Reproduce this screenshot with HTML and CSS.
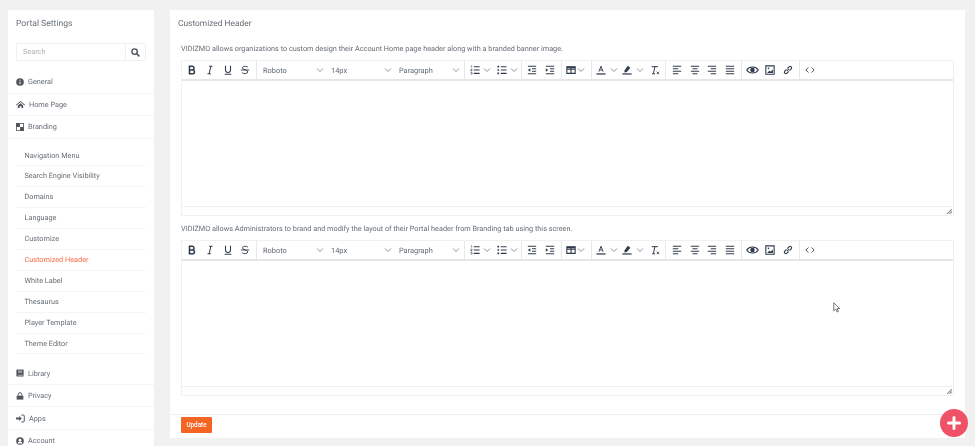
FILE: index.html
```html
<!DOCTYPE html>
<html lang="en">
<head>
<meta charset="utf-8">
<title>Portal Settings</title>
<link rel="stylesheet" href="styles.css">
</head>
<body>
<svg class="defs" width="0" height="0" aria-hidden="true">
  <symbol id="i-bold" viewBox="0 0 12 12"><path d="M3 1.500h3.600a2.300 2.300 0 0 1 0 4.500H3zM3 6h4.200a2.300 2.300 0 0 1 0 4.500H3z" fill="none" stroke="currentColor" stroke-width="1.900"/></symbol>
  <symbol id="i-italic" viewBox="0 0 12 12"><path d="M5 1.500h4M3 10.500h4M7 1.500l-2 9" fill="none" stroke="currentColor" stroke-width="1.200"/></symbol>
  <symbol id="i-under" viewBox="0 0 12 12"><path d="M3 1v5a3 3 0 0 0 6 0V1M2 11h8" fill="none" stroke="currentColor" stroke-width="1.300"/></symbol>
  <symbol id="i-strike" viewBox="0 0 12 12"><path d="M9.500 2.600C8.600 1.400 3 .8 2.900 3.500 2.800 5.500 9.300 5.800 9.300 8.400 9.300 11 3.500 10.800 2.400 9.200M1 6h10" fill="none" stroke="currentColor" stroke-width="1.100"/></symbol>
  <symbol id="i-chev" viewBox="0 0 8 8"><path d="M1 2.500l3 3 3-3" fill="none" stroke="currentColor" stroke-width="1"/></symbol>
  <symbol id="i-ol" viewBox="0 0 12 12"><path d="M4.500 2h7M4.500 6h7M4.500 10h7" stroke="currentColor" stroke-width="1.300"/><path d="M1 1h1v2M.7 5h1.800v1.200H1V7.200h1.500M.7 9h1.800v2H.7" fill="none" stroke="currentColor" stroke-width=".7"/></symbol>
  <symbol id="i-ul" viewBox="0 0 12 12"><path d="M4.500 2h7M4.500 6h7M4.500 10h7" stroke="currentColor" stroke-width="1.300"/><path d="M.5 1h2v2h-2zM.5 5h2v2h-2zM.5 9h2v2h-2z" fill="currentColor"/></symbol>
  <symbol id="i-out" viewBox="0 0 12 12"><path d="M1 1.500h10M6 4.500h5M6 7.500h5M1 10.500h10" stroke="currentColor" stroke-width="1.200"/><path d="M4 3.800v4.400L1 6z" fill="currentColor"/></symbol>
  <symbol id="i-in" viewBox="0 0 12 12"><path d="M1 1.500h10M6 4.500h5M6 7.500h5M1 10.500h10" stroke="currentColor" stroke-width="1.200"/><path d="M1 3.800v4.400L4 6z" fill="currentColor"/></symbol>
  <symbol id="i-table" viewBox="0 0 12 10"><path d="M1 1h10v8H1zM1 4h10M6 1v8" fill="none" stroke="currentColor" stroke-width="1.300"/><path d="M1 1h10v2H1z" fill="currentColor"/></symbol>
  <symbol id="i-color" viewBox="0 0 12 12"><path d="M3.500 8L6 1.500 8.500 8M4.300 6h3.400" fill="none" stroke="currentColor" stroke-width="1.100"/><path d="M.5 10h11v1.500H.5z" fill="currentColor"/></symbol>
  <symbol id="i-mark" viewBox="0 0 12 12"><path d="M3 6.500l4-5.500 3 2.200-4.200 5.300-2.800.5z" fill="currentColor"/><path d="M.5 10h11v1.500H.5z" fill="currentColor"/></symbol>
  <symbol id="i-clear" viewBox="0 0 12 12"><path d="M2 2h7.500M5.800 2L4.200 10M2.500 10.500h3.500" fill="none" stroke="currentColor" stroke-width="1.200"/><path d="M8 8l3 3M11 8l-3 3" stroke="currentColor" stroke-width="1"/></symbol>
  <symbol id="i-left" viewBox="0 0 12 12"><path d="M1 1.500h10M1 4.500h6.500M1 7.500h10M1 10.500h6.500" stroke="currentColor" stroke-width="1.200"/></symbol>
  <symbol id="i-center" viewBox="0 0 12 12"><path d="M1 1.500h10M3 4.500h6M1 7.500h10M3 10.500h6" stroke="currentColor" stroke-width="1.200"/></symbol>
  <symbol id="i-right" viewBox="0 0 12 12"><path d="M1 1.500h10M4.500 4.500H11M1 7.500h10M4.500 10.500H11" stroke="currentColor" stroke-width="1.200"/></symbol>
  <symbol id="i-just" viewBox="0 0 12 12"><path d="M1 1.500h10M1 4.500h10M1 7.500h10M1 10.500h10" stroke="currentColor" stroke-width="1.200"/></symbol>
  <symbol id="i-eye" viewBox="0 0 14 10"><path d="M.8 5C3.500.6 10.500.6 13.200 5 10.500 9.400 3.500 9.400.8 5z" fill="none" stroke="currentColor" stroke-width="1.200"/><circle cx="7" cy="5" r="2.400" fill="currentColor"/></symbol>
  <symbol id="i-img" viewBox="0 0 12 12"><path d="M1 1h10v10H1z" fill="none" stroke="currentColor" stroke-width="1.300"/><path d="M2.500 9.500l3-3 1.500 1.500 2.500-3v4.500z" fill="currentColor"/><circle cx="4.200" cy="4" r="1" fill="currentColor"/></symbol>
  <symbol id="i-link" viewBox="0 0 12 12"><path d="M5 7l2-2M4.200 5.300L2 7.500a1.800 1.800 0 0 0 2.500 2.500l2.200-2.200M5.300 4.200L7.500 2A1.800 1.800 0 0 1 10 4.500L7.800 6.700" fill="none" stroke="currentColor" stroke-width="1.300"/></symbol>
  <symbol id="i-code" viewBox="0 0 12 8"><path d="M4 1L1 4l3 3M8 1l3 3-3 3" fill="none" stroke="currentColor" stroke-width="1.100"/></symbol>
  <symbol id="i-grip" viewBox="0 0 6 6"><path d="M0 6l6-6M3 6l3-3" stroke="#8a8f94" stroke-width="1.300"/></symbol>
</svg>

<div class="page">
  <aside class="sidebar">
    <h2 class="side-title">Portal Settings</h2>
    <div class="search">
      <span class="search-input">Search</span>
      <span class="search-btn">
        <svg viewBox="0 0 10 10" width="9" height="9"><circle cx="4" cy="4" r="3" fill="none" stroke="#495057" stroke-width="1.500"/><path d="M6.300 6.300L9.300 9.300" stroke="#495057" stroke-width="1.700"/></svg>
      </span>
    </div>
    <ul class="menu">
      <li class="menu-item"><svg class="menu-icon" viewBox="0 0 10 10"><circle cx="5" cy="5" r="4.800" fill="currentColor"/><path d="M5 2.200v1.300M5 4.500v3.200" stroke="#fff" stroke-width="1.100"/></svg>General</li>
      <li class="menu-item"><svg class="menu-icon icon-wide" viewBox="0 0 10 10"><path d="M0 5.300L5 1l5 4.300-.6.700L5 2.300.6 6zM2 6l3-2.500L8 6v3H6V7H4v2H2z" fill="currentColor"/></svg>Home Page</li>
      <li class="menu-item"><svg class="menu-icon" viewBox="0 0 10 10"><path d="M0 0h10v10H0z" fill="currentColor"/><path d="M5 1h4v4H5zM1 5h4v4H1z" fill="#fff"/></svg>Branding</li>
    </ul>
    <ul class="submenu">
      <li class="sub-item">Navigation Menu</li>
      <li class="sub-item">Search Engine Visibility</li>
      <li class="sub-item">Domains</li>
      <li class="sub-item">Language</li>
      <li class="sub-item">Customize</li>
      <li class="sub-item sub-active">Customized Header</li>
      <li class="sub-item">White Label</li>
      <li class="sub-item">Thesaurus</li>
      <li class="sub-item">Player Template</li>
      <li class="sub-item">Theme Editor</li>
    </ul>
    <ul class="menu">
      <li class="menu-item"><svg class="menu-icon" viewBox="0 0 10 10"><path d="M.5 1.500A1 1 0 0 1 1.500.5h8v9h-8a1 1 0 0 1-1-1z" fill="currentColor"/><path d="M2.500 2.500h5M2.500 4h5M2.500 7.800h6" stroke="#fff" stroke-width=".7"/></svg>Library</li>
      <li class="menu-item"><svg class="menu-icon" viewBox="0 0 10 10"><path d="M2.800 4.500V3a2.200 2.200 0 0 1 4.400 0v1.500" fill="none" stroke="currentColor" stroke-width="1.200"/><path d="M.8 4.500h8.400v5H.8z" fill="currentColor"/></svg>Privacy</li>
      <li class="menu-item"><svg class="menu-icon icon-wide" viewBox="0 0 10 10"><path d="M0 4h3.500V2.300L6.500 5l-3 2.700V6H0z" fill="currentColor"/><path d="M6 1.200h2.200a1 1 0 0 1 1 1v5.600a1 1 0 0 1-1 1H6" fill="none" stroke="currentColor" stroke-width="1.100"/></svg>Apps</li>
      <li class="menu-item"><svg class="menu-icon" viewBox="0 0 10 10"><circle cx="5" cy="5" r="4.800" fill="currentColor"/><circle cx="5" cy="4" r="1.700" fill="#fff"/><path d="M2 8a3 2.400 0 0 1 6 0z" fill="#fff"/></svg>Account</li>
    </ul>
  </aside>

  <main class="content">
    <h1 class="content-title">Customized Header</h1>
    <div class="content-body">
      <p class="desc">VIDIZMO allows organizations to custom design their Account Home page header along with a branded banner image.</p>
      <section class="editor">
        <div class="toolbar">
          <div class="tgroup g-format">
            <span class="tbtn"><svg class="ico"><use href="#i-bold"/></svg></span>
            <span class="tbtn"><svg class="ico"><use href="#i-italic"/></svg></span>
            <span class="tbtn"><svg class="ico"><use href="#i-under"/></svg></span>
            <span class="tbtn"><svg class="ico"><use href="#i-strike"/></svg></span>
          </div>
          <div class="tgroup g-selects">
            <span class="tselect">Roboto<svg class="chev"><use href="#i-chev"/></svg></span>
            <span class="tselect">14px<svg class="chev"><use href="#i-chev"/></svg></span>
            <span class="tselect">Paragraph<svg class="chev"><use href="#i-chev"/></svg></span>
          </div>
          <div class="tgroup g-lists">
            <span class="tsplit"><svg class="ico"><use href="#i-ol"/></svg><svg class="chev"><use href="#i-chev"/></svg></span>
            <span class="tsplit"><svg class="ico"><use href="#i-ul"/></svg><svg class="chev"><use href="#i-chev"/></svg></span>
          </div>
          <div class="tgroup g-indent">
            <span class="tbtn"><svg class="ico"><use href="#i-out"/></svg></span>
            <span class="tbtn"><svg class="ico"><use href="#i-in"/></svg></span>
          </div>
          <div class="tgroup g-table">
            <span class="tsplit split-tight"><svg class="ico"><use href="#i-table"/></svg><svg class="chev"><use href="#i-chev"/></svg></span>
          </div>
          <div class="tgroup g-color">
            <span class="tsplit split-loose"><svg class="ico"><use href="#i-color"/></svg><svg class="chev"><use href="#i-chev"/></svg></span>
            <span class="tsplit split-loose"><svg class="ico"><use href="#i-mark"/></svg><svg class="chev"><use href="#i-chev"/></svg></span>
            <span class="tbtn"><svg class="ico"><use href="#i-clear"/></svg></span>
          </div>
          <div class="tgroup g-align">
            <span class="tbtn"><svg class="ico"><use href="#i-left"/></svg></span>
            <span class="tbtn"><svg class="ico"><use href="#i-center"/></svg></span>
            <span class="tbtn"><svg class="ico"><use href="#i-right"/></svg></span>
            <span class="tbtn"><svg class="ico"><use href="#i-just"/></svg></span>
          </div>
          <div class="tgroup g-insert">
            <span class="tbtn"><svg class="ico wide"><use href="#i-eye"/></svg></span>
            <span class="tbtn"><svg class="ico"><use href="#i-img"/></svg></span>
            <span class="tbtn"><svg class="ico"><use href="#i-link"/></svg></span>
          </div>
          <div class="tgroup g-code">
            <span class="tbtn"><svg class="ico"><use href="#i-code"/></svg></span>
          </div>
        </div>
        <div class="edit-area"></div>
        <div class="statusbar"><svg class="grip"><use href="#i-grip"/></svg></div>
      </section>
      <p class="desc desc-second">VIDIZMO allows Administrators to brand and modify the layout of their Portal header from Branding tab using this screen.</p>
      <section class="editor">
        <div class="toolbar">
          <div class="tgroup g-format">
            <span class="tbtn"><svg class="ico"><use href="#i-bold"/></svg></span>
            <span class="tbtn"><svg class="ico"><use href="#i-italic"/></svg></span>
            <span class="tbtn"><svg class="ico"><use href="#i-under"/></svg></span>
            <span class="tbtn"><svg class="ico"><use href="#i-strike"/></svg></span>
          </div>
          <div class="tgroup g-selects">
            <span class="tselect">Roboto<svg class="chev"><use href="#i-chev"/></svg></span>
            <span class="tselect">14px<svg class="chev"><use href="#i-chev"/></svg></span>
            <span class="tselect">Paragraph<svg class="chev"><use href="#i-chev"/></svg></span>
          </div>
          <div class="tgroup g-lists">
            <span class="tsplit"><svg class="ico"><use href="#i-ol"/></svg><svg class="chev"><use href="#i-chev"/></svg></span>
            <span class="tsplit"><svg class="ico"><use href="#i-ul"/></svg><svg class="chev"><use href="#i-chev"/></svg></span>
          </div>
          <div class="tgroup g-indent">
            <span class="tbtn"><svg class="ico"><use href="#i-out"/></svg></span>
            <span class="tbtn"><svg class="ico"><use href="#i-in"/></svg></span>
          </div>
          <div class="tgroup g-table">
            <span class="tsplit split-tight"><svg class="ico"><use href="#i-table"/></svg><svg class="chev"><use href="#i-chev"/></svg></span>
          </div>
          <div class="tgroup g-color">
            <span class="tsplit split-loose"><svg class="ico"><use href="#i-color"/></svg><svg class="chev"><use href="#i-chev"/></svg></span>
            <span class="tsplit split-loose"><svg class="ico"><use href="#i-mark"/></svg><svg class="chev"><use href="#i-chev"/></svg></span>
            <span class="tbtn"><svg class="ico"><use href="#i-clear"/></svg></span>
          </div>
          <div class="tgroup g-align">
            <span class="tbtn"><svg class="ico"><use href="#i-left"/></svg></span>
            <span class="tbtn"><svg class="ico"><use href="#i-center"/></svg></span>
            <span class="tbtn"><svg class="ico"><use href="#i-right"/></svg></span>
            <span class="tbtn"><svg class="ico"><use href="#i-just"/></svg></span>
          </div>
          <div class="tgroup g-insert">
            <span class="tbtn"><svg class="ico wide"><use href="#i-eye"/></svg></span>
            <span class="tbtn"><svg class="ico"><use href="#i-img"/></svg></span>
            <span class="tbtn"><svg class="ico"><use href="#i-link"/></svg></span>
          </div>
          <div class="tgroup g-code">
            <span class="tbtn"><svg class="ico"><use href="#i-code"/></svg></span>
          </div>
        </div>
        <div class="edit-area"></div>
        <div class="statusbar"><svg class="grip"><use href="#i-grip"/></svg></div>
      </section>
    </div>
    <div class="content-foot">
      <button class="update" type="button">Update</button>
    </div>
  </main>
</div>

<svg class="cursor" viewBox="0 0 8 11" width="8" height="11"><path d="M.8.8v8l2-1.700 1.300 2.900 1.300-.6-1.300-2.800h2.700z" fill="#fff" stroke="#555" stroke-width=".8"/></svg>
<button class="fab" type="button" aria-label="Add"><svg viewBox="0 0 14 14" width="14" height="14"><path d="M7 1.500v11M1.500 7h11" stroke="#fff" stroke-width="3" stroke-linecap="round"/></svg></button>
</body>
</html>
```

FILE: styles.css
```css
* { box-sizing: border-box; }
html, body { margin: 0; height: 100%; }
body {
  background: #f1f1f1;
  font-family: Roboto, "Liberation Sans", sans-serif;
  color: #666e76;
  overflow: hidden;
  text-rendering: geometricPrecision;
}
ul { list-style: none; margin: 0; padding: 0; }
.defs { position: absolute; }
.page {
  display: flex;
  align-items: flex-start;
  gap: 16px;
  height: 446px;
  padding: 10px 10px 0 8px;
  overflow: hidden;
  will-change: transform;
}
.sidebar {
  flex: 0 0 146px;
  min-height: 440px;
  background: #fff;
}
.side-title {
  margin: 0;
  padding: 7.500px 8px 0;
  height: 33px;
  font-size: 8.600px;
  line-height: 12px;
  font-weight: 400;
  color: #666e76;
}
.search {
  display: flex;
  height: 18px;
  margin: 0 8px 10px;
  border: 1px solid #f0f0f0;
  border-radius: 2px;
}
.search-input {
  flex: 1;
  padding-left: 6px;
  font-size: 7.300px;
  line-height: 16px;
  color: #a9afb5;
}
.search-btn {
  flex: 0 0 20px;
  display: flex;
  align-items: center;
  justify-content: center;
  border-left: 1px solid #f0f0f0;
}
.menu-item {
  display: flex;
  align-items: center;
  gap: 4px;
  height: 22.500px;
  padding-left: 8px;
  font-size: 7.300px;
  color: #666e76;
  border-bottom: 1px solid #f5f5f5;
}
.menu-icon { width: 8px; height: 8px; color: #50565c; flex: none; }
.icon-wide { width: 9px; height: 9px; }
.submenu { padding: 7px 8px 8px; }
.sub-item {
  height: 20.900px;
  padding-left: 8.500px;
  font-size: 7.300px;
  line-height: 20px;
  border-bottom: 1px solid #f5f5f5;
  color: #666e76;
}
.sub-active { color: #f56b43; }

.content {
  flex: 0 0 795px;
  height: 428px;
  background: #fff;
  display: flex;
  flex-direction: column;
}
.content-title {
  margin: 0;
  padding: 7.500px 8px 0;
  height: 29px;
  font-size: 8.400px;
  line-height: 12px;
  font-weight: 400;
  color: #666e76;
}
.content-body { flex: 1; padding: 0 11px; }
.desc {
  margin: 0;
  height: 21px;
  padding: 5px 0 0 0;
  font-size: 7.300px;
  line-height: 10px;
  color: #666e76;
}
.desc-second { height: 24px; padding-top: 8px; }
.editor { border: 1px solid #f0f0f0; }
.toolbar {
  display: flex;
  height: 20px;
  border-bottom: 2px solid #e6e6e6;
}
.tgroup {
  display: flex;
  align-items: center;
  flex: none;
  border-right: 1px solid #e8e8e8;
  height: 100%;
}
.g-format { width: 75px; padding-left: 1.500px; }
.g-selects { width: 208px; }
.g-lists { width: 56.500px; padding-left: 4px; }
.g-indent { width: 40px; padding-left: 2px; }
.g-table { width: 30px; padding-left: 2px; }
.g-color { width: 74.500px; padding-left: 2px; }
.g-align { width: 75.500px; padding-left: 2px; }
.g-insert { width: 58px; padding-left: 2px; }
.g-code { border-right: 0; padding-left: 2px; }
.tbtn {
  flex: 0 0 17.700px;
  display: flex;
  align-items: center;
  justify-content: center;
  color: #2f3b4b;
}
.tsplit {
  flex: 0 0 26.500px;
  display: flex;
  align-items: center;
  gap: 3px;
  padding-left: 1px;
  color: #2f3b4b;
}
.split-tight { gap: 1px; padding-left: 2px; flex-basis: 27px; }
.split-loose { gap: 4px; padding-left: 2px; }
.ico { width: 10px; height: 10px; flex: none; }
.ico.wide { width: 13px; }
.chev { width: 8px; height: 8px; color: #8a9099; flex: none; }
.tselect {
  display: flex;
  align-items: center;
  justify-content: space-between;
  flex: 0 0 68px;
  padding: 0 1px 0 6px;
  font-size: 7.400px;
  color: #5f6873;
}
.edit-area { height: 126px; border-bottom: 1px solid #f0f0f0; }
.statusbar {
  height: 8px;
  display: flex;
  justify-content: flex-end;
  align-items: flex-end;
}
.grip { width: 5px; height: 5px; margin: 0 1px 1px 0; }
.content-foot {
  height: 24px;
  border-top: 1px solid #f0f0f0;
  padding: 2px 11px 0;
}
.update {
  display: block;
  width: 31px;
  height: 16px;
  padding: 0;
  border: 0;
  border-radius: 1px;
  background: #f46524;
  color: #fff;
  font-family: inherit;
  font-size: 6.300px;
  font-weight: 500;
}
.cursor { position: absolute; left: 833px; top: 302px; }
.fab {
  position: fixed;
  left: 940px;
  top: 409px;
  width: 28px;
  height: 28px;
  padding: 0;
  border: 0;
  border-radius: 50%;
  background: #ef5267;
  display: flex;
  align-items: center;
  justify-content: center;
}
```
